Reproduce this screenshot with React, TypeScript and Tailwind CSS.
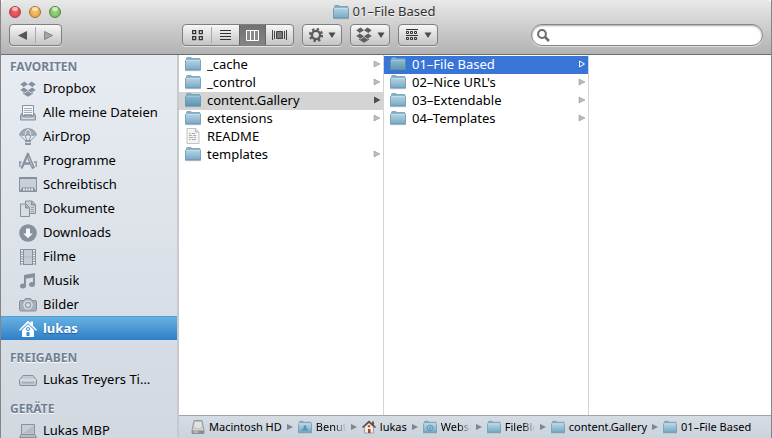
import { useState } from "react";
import type { ReactNode } from "react";

const favorites = [
  "Dropbox",
  "Alle meine Dateien",
  "AirDrop",
  "Programme",
  "Schreibtisch",
  "Dokumente",
  "Downloads",
  "Filme",
  "Musik",
  "Bilder",
  "lukas",
];

function Folder({ size = 16, active = false, mark = "" }: { size?: number; active?: boolean; mark?: string }) {
  return (
    <svg width={size} height={size} viewBox="0 0 16 16" className="shrink-0" aria-hidden="true">
      <defs>
        <linearGradient id="folderFace" x1="0" y1="0" x2="0" y2="1">
          <stop offset="0" stopColor="#b6d4e4" />
          <stop offset="1" stopColor="#78a8c4" />
        </linearGradient>
        <linearGradient id="folderOpen" x1="0" y1="0" x2="0" y2="1">
          <stop offset="0" stopColor="#8abace" />
          <stop offset="1" stopColor="#5c94b2" />
        </linearGradient>
      </defs>
      <path d="M1.5 4V2.5q0-1 1-1h3q1 0 1 1h8q.5 0 .5.5v2H1.500z" fill="#7eafc8" stroke="#6797b2" strokeWidth=".7" />
      <rect x=".5" y="4" width="15" height="10" rx=".5" fill={active ? "url(#folderOpen)" : "url(#folderFace)"} />
      <path d="M.5 4.300h15" stroke={active ? "#a8ccdc" : "#cfe3ed"} strokeWidth=".8" />
      <path d="M.5 4v10h15V4" fill="none" stroke="#5d8ba6" strokeWidth=".7" />
      <path d="M0 14.700h16" stroke="#436d86" strokeOpacity=".5" strokeWidth=".7" />
      {mark === "person" && <path d="M8 6a1.700 1.700 0 0 1 1 3l2.500 1.500V12h-7v-1.500L7 9a1.700 1.700 0 0 1 1-3z" fill="#5b90ae" />}
      {mark === "globe" && (
        <g fill="none" stroke="#5b90ae">
          <circle cx="8" cy="9" r="3.200" />
          <path d="M6.500 10.500l1-2 2-1-1 2z" fill="#5b90ae" strokeWidth=".4" />
        </g>
      )}
    </svg>
  );
}

function DocIcon() {
  return (
    <svg width="16" height="16" viewBox="0 0 16 16" className="shrink-0" aria-hidden="true">
      <path d="M2 .5h8.500L14 4v11.500H2z" fill="#f4f4f4" stroke="#b5b5b5" strokeWidth=".8" />
      <path d="M10.500.5V4H14" fill="#ddd" stroke="#aaa" strokeWidth=".7" />
      <path d="M4 5.500h2m1 0h3M4 7.500h3m1 0h3M4 9.500h4m1 0h2M4 11.500h2m1 0h4" stroke="#999" strokeWidth=".8" />
    </svg>
  );
}

function DropboxIcon({ color }: { color: string }) {
  return (
    <svg width="18" height="18" viewBox="0 0 18 18" fill={color} className="shrink-0" aria-hidden="true">
      <path d="M5.500 1.500L9 4.200 4.700 7 1.300 4.200zM12.500 1.500L9 4.200 13.300 7l3.400-2.800zM4.700 7.500L9 10.200l-3.500 2.600-4.200-2.700zM13.300 7.500L9 10.200l3.500 2.600 4.200-2.700zM9 11l3.400 2.600 1.600-1v1.100l-5 3-5-3v-1.100l1.600 1z" />
    </svg>
  );
}

const grey = "#87919d";
const pale = "#c3cad2";

const sideGlyphs: Record<string, ReactNode> = {
  "Alle meine Dateien": (
    <g stroke={grey}>
      <path d="M3.500 1.500h11v10h-11z" fill="#f3f5f8" />
      <path d="M5 4.500h8M5 6.500h8M5 8.500h8M5 10.500h8" stroke="#a5adb7" />
      <path d="M3 9l-1.500 2.500v4.500h15v-4.500L15 9v3h-3l-1 1H7l-1-1H3z" fill="#b4bcc5" />
      <path d="M3 14.500h12" stroke="#dfe3e9" />
    </g>
  ),
  AirDrop: (
    <g stroke={grey} fill="none">
      <path d="M.8 7.500C1 3.500 4.500.8 9 .8s8 2.700 8.200 6.700q-1.500-1.300-3 0-1.200-1.300-2.700 0-2.500-1.300-5 0-1.500-1.300-2.700 0-1.500-1.300-3 0z" fill="#a1aab5" />
      <path d="M6.300 7C6.300 4 7.500 1.800 9 1.200c1.500.6 2.700 2.800 2.700 5.800" stroke="#dfe4ea" />
      <path d="M1.500 8L7 13M16.500 8L11 13M6.300 8l1.700 5M11.700 8L10 13" strokeWidth=".9" />
      <path d="M6.500 12.500h5v4h-5z" fill="#98a2ad" />
      <path d="M6 14.500h6" stroke="#dfe4ea" strokeWidth=".8" />
    </g>
  ),
  Programme: (
    <g stroke={grey} fill="none">
      <path d="M9.300 1L2.500 16.500" strokeWidth="2.200" />
      <path d="M8.500 2.500l6 14" strokeWidth="3.200" />
      <path d="M4 11.500h9.500" strokeWidth="2.500" />
      <path d="M2.500 10H.8v5M15 10h2.200v5" strokeWidth="1.300" />
      <path d="M9.300 4.500l4.200 10" stroke="#bcc4cd" strokeWidth="1" />
    </g>
  ),
  Schreibtisch: (
    <g stroke={grey}>
      <path d="M.5 1.500h17v14H.5z" fill="#c9cfd7" />
      <path d="M.5 2h17" strokeWidth="2" />
      <path d="M1 15l2-3.500h12l2 3.500z" fill={grey} stroke="none" />
      <path d="M4 13.500h10" stroke="#eceff3" strokeWidth="1.800" strokeDasharray="1.900 .8" />
    </g>
  ),
  Dokumente: (
    <g stroke={grey} fill="#cbd1d9">
      <path d="M6.500 1h6.500l3.500 3.500v9h-10z" />
      <path d="M12.500 1.500v3.500h4" fill="#a3acb7" />
      <path d="M1.500 4h5.500l3.500 3.500v9h-9z" fill="#d8dde4" />
      <path d="M6.500 4.500v3.500h4" fill="#a3acb7" />
      <path d="M12 7.500h3M12 9.500h3M12 11.500h3" strokeWidth=".7" />
    </g>
  ),
  Downloads: (
    <g>
      <circle cx="9" cy="9" r="8.800" fill={grey} />
      <path d="M7 4.500h4v5h2.800L9 14.300 4.200 9.500H7z" fill="#f5f7f9" />
    </g>
  ),
  Filme: (
    <g>
      <path d="M1 1h16v16H1z" fill={grey} />
      <path d="M5 2h8v6H5zM5 10h8v6H5z" fill="#c5ccd4" />
      <path d="M3 2v15M15 2v15" stroke="#eef1f4" strokeWidth="2" strokeDasharray="1.400 1" />
      <path d="M5 9h8" stroke="#eef1f4" />
    </g>
  ),
  Musik: (
    <g fill={grey}>
      <path d="M5 3l11-2v4L7 6.700V14H5zM14 3h2v9h-2z" />
      <ellipse cx="4" cy="14" rx="3" ry="2.500" />
      <ellipse cx="13" cy="12.500" rx="3" ry="2.500" />
    </g>
  ),
  Bilder: (
    <g>
      <path d="M2 4.500h3l1.500-2h5l1.500 2h3q1.500 0 1.500 1.500v7.500q0 1.500-1.500 1.500H2q-1.500 0-1.500-1.500V6q0-1.500 1.500-1.500z" fill="#a7b0ba" stroke={grey} />
      <circle cx="9" cy="9" r="4" fill="#98a2ad" stroke="#e5e9ee" strokeWidth="1.200" />
      <circle cx="9" cy="9" r="1.800" fill="#dfe4ea" />
    </g>
  ),
  lukas: (
    <g fill="#fff">
      <path d="M9 .8l2.500 2.500V1.500H14v4.200l4 4-1 1L9 3.200l-8 7.500-1-1z" />
      <path fillRule="evenodd" d="M3 10l6-5.500 6 5.500v7H3zM7.500 12v4h3v-4zM9 7a2 2 0 1 0 .01 0z" />
      <circle cx="9" cy="9" r=".9" />
    </g>
  ),
  "Lukas Treyers Ti…": (
    <g stroke={grey} fill={pale}>
      <path d="M4 4.500h10L17.500 9v4q0 1.500-1.500 1.500H2Q.5 14.500.5 13V9z" />
      <path d="M1 9h16" fill="none" stroke="#e8ebef" />
      <path d="M3 11.800h12" stroke="#969fa9" />
    </g>
  ),
  "Lukas MBP": (
    <g stroke={grey}>
      <path d="M2.500 2.500h13v10h-13z" fill="#c8ced6" />
      <path d="M3.500 11.500L14.500 3.500v8z" fill="#b4bbc4" stroke="none" />
      <path d="M2 12.500L.5 15.500h17L16 12.500z" fill="#b4bbc4" />
    </g>
  ),
};

function SideRow({ name, selected, onSelect }: { name: string; selected: boolean; onSelect: () => void }) {
  return (
    <li>
      <button
        type="button"
        onClick={onSelect}
        className={
          selected
            ? "flex h-6 w-full items-center gap-1.5 border-t border-[#4f9fd3] bg-linear-to-b from-[#66b1e0] to-[#2f7fc8] pl-[18px] text-left font-bold text-white text-shadow-[0_1px_1px_#1d5a98]"
            : "flex h-6 w-full items-center gap-1.5 pt-0.5 pl-[18px] text-left"
        }
      >
        {name === "Dropbox" ? (
          <DropboxIcon color={grey} />
        ) : (
          <svg width="18" height="18" viewBox="0 0 18 18" className="shrink-0" aria-hidden="true">
            {sideGlyphs[name]}
          </svg>
        )}
        <span className="truncate">{name}</span>
      </button>
    </li>
  );
}

function SideHeading({ children }: { children: ReactNode }) {
  return <h2 className="h-[18px] pl-[9px] text-[12px] leading-[18px] font-bold text-[#718094] text-shadow-[0_1px_0_#fff]">{children}</h2>;
}

function RowArrow({ tone }: { tone: "pale" | "dark" | "open" }) {
  return (
    <svg width="8" height="8" viewBox="0 0 8 8" className="mr-0.5 ml-auto shrink-0" aria-hidden="true">
      {tone === "open" && <path d="M1.500 1v6L6.500 4z" fill="none" stroke="#fff" />}
      {tone === "dark" && <path d="M1 .5v7L7.500 4z" fill="#4d4d4d" />}
      {tone === "pale" && <path d="M1 1v6l6-3z" fill="#bdbdbd" stroke="#999" strokeWidth=".6" />}
    </svg>
  );
}

type Entry = { name: string; kind?: "file"; state?: "path" | "active" };

function Column({ entries }: { entries: Entry[] }) {
  return (
    <ul className="w-[205px] shrink-0 border-r border-[#d4d4d4] pt-px">
      {entries.map(({ name, kind, state }) => (
        <li key={name}>
          <button
            type="button"
            className={
              state === "active"
                ? "flex h-[18px] w-full items-center gap-1.5 bg-[#3875d7] pb-0.5 pl-1.5 text-white"
                : state === "path"
                  ? "flex h-[18px] w-full items-center gap-1.5 bg-[#d4d4d4] pb-0.5 pl-1.5"
                  : "flex h-[18px] w-full items-center gap-1.5 pb-0.5 pl-1.5"
            }
          >
            {kind === "file" ? <DocIcon /> : <Folder active={!!state} />}
            <span className="leading-[18px]">{name}</span>
            {kind !== "file" && <RowArrow tone={state === "active" ? "open" : state === "path" ? "dark" : "pale"} />}
          </button>
        </li>
      ))}
    </ul>
  );
}

function Light({ tone, label }: { tone: string; label: string }) {
  return (
    <button type="button" aria-label={label} className={tone}>
      <span className="h-1 w-1.5 rounded-full bg-white/60" />
    </button>
  );
}

const control = "h-[22px] rounded-[4px] border border-[#7f7f7f] bg-linear-to-b from-[#f7f7f7] to-[#c4c4c4] shadow-[0_1px_0_#e2e2e2]";

function DropArrow() {
  return (
    <svg width="8" height="6" viewBox="0 0 8 6" className="shrink-0" aria-hidden="true">
      <path d="M.5.500h7L4 6z" fill="#4a4a4a" />
    </svg>
  );
}

function MenuButton({ label, children }: { label: string; children: ReactNode }) {
  return (
    <button type="button" aria-label={label} className={control + " flex w-10 items-center justify-center gap-1"}>
      {children}
      <DropArrow />
    </button>
  );
}

function HomeIcon() {
  return (
    <svg width="14" height="14" viewBox="0 0 14 14" aria-hidden="true">
      <path d="M2.500 7L7 3l4.500 4v6h-9z" fill="#f3ece0" stroke="#8f877c" strokeWidth=".7" />
      <path d="M10 1.500h2v4l-2-2z" fill="#8c4b32" />
      <path d="M.5 7.500L7 1.500l6.500 6" fill="none" stroke="#4e4540" strokeWidth="1.500" />
      <path d="M6 9h2.500v4H6z" fill="#a14a32" />
      <circle cx="7" cy="6.300" r="1.200" fill="#c9502c" />
    </svg>
  );
}

function DiskIcon() {
  return (
    <svg width="14" height="14" viewBox="0 0 14 14" aria-hidden="true">
      <path d="M3 .5h8l2 10v3H1v-3z" fill="#d5d5d5" stroke="#888" strokeWidth=".8" />
      <path d="M3.500 1.500h7l1 6q-4.500 3-9 0z" fill="#e2e2e2" stroke="#aaa" strokeWidth=".6" />
      <path d="M1 10.500h12v3H1z" fill="#8b8b8b" />
      <path d="M2.500 12h5" stroke="#ddd" />
    </svg>
  );
}

const crumbs: { name: string; icon: ReactNode; clip?: boolean }[] = [
  { name: "Macintosh HD", icon: <DiskIcon /> },
  { name: "Benutzer", icon: <Folder size={14} mark="person" />, clip: true },
  { name: "lukas", icon: <HomeIcon /> },
  { name: "Websites", icon: <Folder size={14} mark="globe" />, clip: true },
  { name: "FileBlog", icon: <Folder size={14} />, clip: true },
  { name: "content.Gallery", icon: <Folder size={14} /> },
  { name: "01–File Based", icon: <Folder size={14} /> },
];

export default function App() {
  const [place, setPlace] = useState("lukas");

  return (
    <div className="flex h-screen flex-col overflow-hidden border-x border-[#858585] bg-white font-['Noto_Sans','Open_Sans',sans-serif] text-[13px] text-black">
      <header className="flex h-[55px] shrink-0 flex-col rounded-t-[4px] border-b border-[#6d6d6d] bg-linear-to-b from-[#e9e9e9] to-[#b2b2b2]">
        <div className="grid h-6 grid-cols-[1fr_auto_1fr] items-center pr-3 pl-2">
          <div className="flex gap-2">
            <Light label="Schließen" tone="flex size-3 justify-center rounded-full border border-[#96464a] bg-radial from-[#f2636b] to-[#df3844]" />
            <Light label="Minimieren" tone="flex size-3 justify-center rounded-full border border-[#9b733c] bg-radial from-[#f9c468] to-[#e79b3c]" />
            <Light label="Vergrößern" tone="flex size-3 justify-center rounded-full border border-[#568047] bg-radial from-[#9fd77e] to-[#68b452]" />
          </div>
          <h1 className="flex items-center gap-1 text-[#333] text-shadow-[0_1px_0_#f5f5f5]">
            <Folder />
            01–File Based
          </h1>
        </div>
        <div className="flex px-2">
          <div className={control + " flex w-[53px] items-center"}>
            <button type="button" aria-label="Zurück" className="flex h-4 flex-1 items-center justify-center border-r border-[#aaa]">
              <svg width="9" height="9" viewBox="0 0 9 9" aria-hidden="true"><path d="M9 0v9L0 4.500z" fill="#555" /></svg>
            </button>
            <button type="button" aria-label="Vorwärts" className="flex h-4 flex-1 items-center justify-center">
              <svg width="9" height="9" viewBox="0 0 9 9" aria-hidden="true"><path d="M.5.500v8l8-4z" fill="#a5a5a5" stroke="#777" strokeWidth=".8" /></svg>
            </button>
          </div>
          <div className={control + " ml-[120px] flex w-28 items-center overflow-hidden"}>
            <button type="button" aria-label="Symbole" className="flex h-4 w-[29px] items-center justify-center border-r border-[#aaa]">
              <svg width="11" height="11" viewBox="0 0 11 11" fill="none" stroke="#333" strokeWidth="1.300" aria-hidden="true">
                <path d="M.7.700h3v3h-3zM7.300.700h3v3h-3zM.7 6.700h3v3h-3zM7.300 6.700h3v3h-3z" />
              </svg>
            </button>
            <button type="button" aria-label="Liste" className="flex h-4 w-[27px] items-center justify-center">
              <svg width="11" height="11" viewBox="0 0 11 11" stroke="#333" aria-hidden="true"><path d="M0 .5h11M0 3.500h11M0 6.500h11M0 9.500h11" /></svg>
            </button>
            <button type="button" aria-label="Spalten" aria-pressed="true" className="flex h-[22px] w-[27px] items-center justify-center border-x border-[#666] bg-linear-to-b from-[#707070] to-[#858585]">
              <svg width="13" height="11" viewBox="0 0 13 11" className="shrink-0" fill="#8a8a8a" stroke="#fff" aria-hidden="true">
                <path d="M.5.500h4v10h-4zM4.500.500h4v10h-4zM8.500.500h4v10h-4z" />
              </svg>
            </button>
            <button type="button" aria-label="Cover Flow" className="flex h-4 flex-1 items-center justify-center">
              <svg width="15" height="11" viewBox="0 0 15 11" className="shrink-0" aria-hidden="true">
                <path d="M.5 0v10M2.500 1v8M12.500 1v8M14.500 0v10" stroke="#444" />
                <path d="M4.500 1.500h6v7h-6z" fill="#777" stroke="#444" />
              </svg>
            </button>
          </div>
          <div className="ml-2 flex gap-2">
            <MenuButton label="Aktionen">
              <svg width="16" height="16" viewBox="0 0 16 16" className="shrink-0" aria-hidden="true">
                <circle cx="8" cy="8" r="6" fill="none" stroke="#5a5a5a" strokeWidth="2.200" strokeDasharray="2.350 2.362" />
                <circle cx="8" cy="8" r="4.100" fill="none" stroke="#5a5a5a" strokeWidth="2.400" />
              </svg>
            </MenuButton>
            <MenuButton label="Dropbox">
              <DropboxIcon color="#5e5e5e" />
            </MenuButton>
            <MenuButton label="Ausrichten nach">
              <svg width="16" height="12" viewBox="0 0 16 12" className="shrink-0" fill="none" stroke="#333" aria-hidden="true">
                <path d="M2 .5h12M2.500 2.500h2v2h-2zM6.500 2.500h2v2h-2zM10.500 2.500h2v2h-2zM2 6.500h12M2.500 8.500h2v2h-2zM6.500 8.500h2v2h-2zM10.500 8.500h2v2h-2z" />
              </svg>
            </MenuButton>
          </div>
          <label className="ml-auto flex h-[22px] w-[232px] items-center gap-1 rounded-full border border-[#858585] bg-white pl-[5px] shadow-[inset_0_1px_2px_#aaa,0_1px_0_#ddd]">
            <svg width="13" height="13" viewBox="0 0 13 13" fill="none" stroke="#6b6b6b" aria-hidden="true">
              <circle cx="5" cy="5" r="3.900" strokeWidth="2" />
              <path d="M8 8l4 4" strokeWidth="2.500" />
            </svg>
            <input type="search" aria-label="Suchen" className="min-w-0 flex-1 bg-transparent outline-none" />
          </label>
        </div>
      </header>

      <div className="flex min-h-0 flex-1">
        <nav className="w-[178px] shrink-0 overflow-hidden border-r-2 border-[#c6c9cd] bg-linear-to-b from-[#e8ecf2] to-[#d1d8e0] pt-[3px]">
          <SideHeading>FAVORITEN</SideHeading>
          <ul>
            {favorites.map((name) => (
              <SideRow key={name} name={name} selected={place === name} onSelect={() => setPlace(name)} />
            ))}
          </ul>
          <div className="mt-[9px]">
            <SideHeading>FREIGABEN</SideHeading>
            <ul>
              <SideRow name="Lukas Treyers Ti…" selected={place === "Lukas Treyers Ti…"} onSelect={() => setPlace("Lukas Treyers Ti…")} />
            </ul>
          </div>
          <div className="mt-[9px]">
            <SideHeading>GERÄTE</SideHeading>
            <ul>
              <SideRow name="Lukas MBP" selected={place === "Lukas MBP"} onSelect={() => setPlace("Lukas MBP")} />
            </ul>
          </div>
        </nav>

        <main className="flex min-w-0 flex-1 flex-col">
          <div className="flex min-h-0 flex-1">
            <Column
              entries={[
                { name: "_cache" },
                { name: "_control" },
                { name: "content.Gallery", state: "path" },
                { name: "extensions" },
                { name: "README", kind: "file" },
                { name: "templates" },
              ]}
            />
            <Column
              entries={[
                { name: "01–File Based", state: "active" },
                { name: "02–Nice URL's" },
                { name: "03–Extendable" },
                { name: "04–Templates" },
              ]}
            />
          </div>
          <footer className="h-[23px] shrink-0 overflow-hidden border-t border-[#a5a5a5] bg-linear-to-b from-[#d5dce4] to-[#cbd3dc] pl-3">
            <ol className="flex h-[22px] items-center text-[11px]">
              {crumbs.map(({ name, icon, clip }, i) => (
                <li key={name} className="flex shrink-0 items-center">
                  {i > 0 && (
                    <svg width="6" height="6" viewBox="0 0 6 6" className="mx-[5px]" aria-hidden="true">
                      <path d="M0 0v6l6-3z" fill="#7d858e" />
                    </svg>
                  )}
                  <button type="button" className="flex items-center gap-1">
                    {icon}
                    <span className={clip ? "w-[30px] overflow-hidden mask-r-from-60% whitespace-nowrap" : "whitespace-nowrap"}>{name}</span>
                  </button>
                </li>
              ))}
            </ol>
          </footer>
        </main>
      </div>
    </div>
  );
}
